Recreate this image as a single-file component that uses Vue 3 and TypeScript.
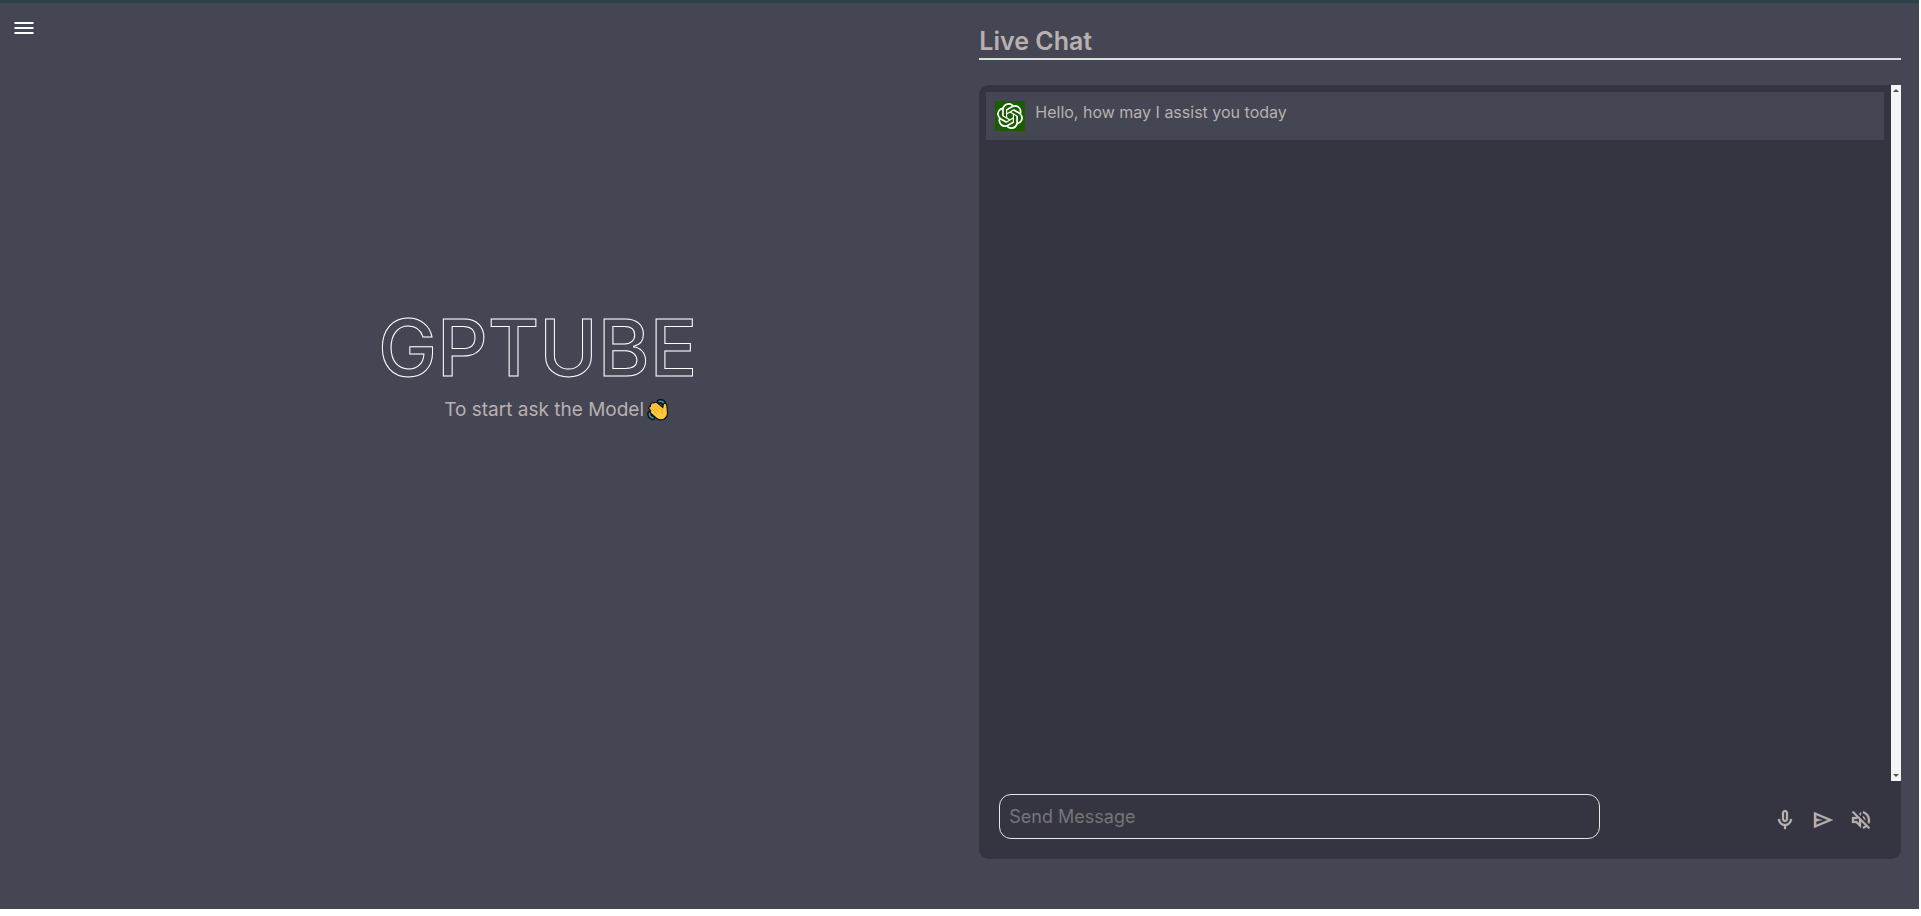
<script setup lang="ts">
import { ref } from 'vue'

interface Message {
  id: number
  text: string
}

const messages = ref<Message[]>([{ id: 1, text: 'Hello, how may I assist you today' }])
const draft = ref<string>('')
</script>

<template>
  <div class="page">
    <main class="layout">
      <section class="welcome">
        <button class="icon-button menu" type="button" aria-label="Menu">
          <svg width="20" height="12" viewBox="0 0 20 12" fill="#fff">
            <path d="M.5 0h19v2H.5zM.5 5h19v2H.5zM.5 10h19v2H.5z" />
          </svg>
        </button>
        <div class="hero">
          <h1 class="wordmark">GPTUBE</h1>
          <p class="tagline">
            <span>To start ask the Model</span>
            <svg class="wave" width="22" height="22" viewBox="0 0 22 22" role="img" aria-label="Waving hand">
              <g fill="none" stroke-linecap="round" stroke-linejoin="round">
                <path d="M12 2.500Q16 1.500 17 5M2.500 14Q2 18 6 19" stroke="#111" stroke-width="4.500" />
                <path d="M12 2.500Q16 1.500 17 5M2.500 14Q2 18 6 19" stroke="#2d9cb8" stroke-width="1.500" />
              </g>
              <path
                d="M2 9.500Q1.500 7.500 3.500 7.500Q2.500 5.500 4.500 4.800Q5 3 7 4Q8.500 2.500 10.500 4L15.800 8.500L16.300 5.500Q17 3.500 18.800 4.500Q20 5.500 20 8L20.500 13.500Q20.500 18.500 16.500 20.300Q12 22 8.500 18.500L4 14.500Q2.500 13 3.700 11.800Z"
                fill="#ffc83d"
                stroke="#111"
                stroke-width="1.200"
                stroke-linejoin="round"
              />
              <path
                d="M5 6.500L11 12M8 5.500L13 10M4.500 9.500L9.500 14.500M16 9Q14 11 15 14"
                fill="none"
                stroke="#d99a1c"
                stroke-width=".8"
                stroke-linecap="round"
              />
            </svg>
          </p>
        </div>
      </section>

      <section class="chat">
        <h2 class="title">Live Chat</h2>
        <div class="panel">
          <div class="scroller">
            <ul class="messages">
              <li v-for="message in messages" :key="message.id" class="message">
                <span class="avatar">
                  <svg width="26" height="26" viewBox="0 0 24 24" fill="#fff">
                    <path
                      d="M22.2819 9.8211a5.9847 5.9847 0 0 0-.5157-4.9108 6.0462 6.0462 0 0 0-6.5098-2.9A6.0651 6.0651 0 0 0 4.9807 4.1818a5.9847 5.9847 0 0 0-3.9977 2.9 6.0462 6.0462 0 0 0 .7427 7.0966 5.98 5.98 0 0 0 .511 4.9107 6.051 6.051 0 0 0 6.5146 2.9001A5.9847 5.9847 0 0 0 13.2599 24a6.0557 6.0557 0 0 0 5.7718-4.2058 5.9894 5.9894 0 0 0 3.9977-2.9001 6.0557 6.0557 0 0 0-.7475-7.0729zm-9.022 12.6081a4.4755 4.4755 0 0 1-2.8764-1.0408l.1419-.0804 4.7783-2.7582a.7948.7948 0 0 0 .3927-.6813v-6.7369l2.02 1.1686a.071.071 0 0 1 .038.052v5.5826a4.504 4.504 0 0 1-4.4945 4.4944zm-9.6607-4.1254a4.4708 4.4708 0 0 1-.5346-3.0137l.142.0852 4.783 2.7582a.7712.7712 0 0 0 .7806 0l5.8428-3.3685v2.3324a.0804.0804 0 0 1-.0332.0615L9.74 19.9502a4.4992 4.4992 0 0 1-6.1408-1.6464zM2.3408 7.8956a4.485 4.485 0 0 1 2.3655-1.9728V11.6a.7664.7664 0 0 0 .3879.6765l5.8144 3.3543-2.0201 1.1685a.0757.0757 0 0 1-.071 0l-4.8303-2.7865A4.504 4.504 0 0 1 2.3408 7.872zm16.5963 3.8558L13.1038 8.364 15.1192 7.2a.0757.0757 0 0 1 .071 0l4.8303 2.7913a4.4944 4.4944 0 0 1-.6765 8.1042v-5.6772a.79.79 0 0 0-.407-.667zm2.0107-3.0231l-.142-.0852-4.7735-2.7818a.7759.7759 0 0 0-.7854 0L9.409 9.2297V6.8974a.0662.0662 0 0 1 .0284-.0615l4.8303-2.7866a4.4992 4.4992 0 0 1 6.6802 4.66zM8.3065 12.863l-2.02-1.1638a.0804.0804 0 0 1-.038-.0567V6.0742a4.4992 4.4992 0 0 1 7.3757-3.4537l-.142.0805L8.704 5.459a.7948.7948 0 0 0-.3927.6813zm1.0976-2.3654l2.602-1.4998 2.6069 1.4998v2.9994l-2.5974 1.4997-2.6067-1.4997Z"
                    />
                  </svg>
                </span>
                <p class="message-text">{{ message.text }}</p>
              </li>
            </ul>
            <div class="scrollbar" aria-hidden="true">
              <svg width="6" height="3" viewBox="0 0 6 3" fill="#505050"><path d="M0 3L3 0L6 3Z" /></svg>
              <svg width="6" height="3" viewBox="0 0 6 3" fill="#505050"><path d="M0 0L3 3L6 0Z" /></svg>
            </div>
          </div>
          <form class="composer" @submit.prevent>
            <input v-model="draft" class="field" type="text" placeholder="Send Message" aria-label="Send Message" />
            <div class="actions">
              <button class="icon-button" type="button" aria-label="Record voice">
                <svg width="24" height="24" viewBox="0 0 24 24" fill="currentColor">
                  <path
                    d="M12 14c1.660 0 3-1.340 3-3V5c0-1.660-1.340-3-3-3S9 3.340 9 5v6c0 1.660 1.340 3 3 3zm-1-9c0-.550.450-1 1-1s1 .450 1 1v6c0 .550-.450 1-1 1s-1-.450-1-1V5zm6 6c0 2.760-2.240 5-5 5s-5-2.240-5-5H5c0 3.530 2.610 6.430 6 6.920V21h2v-3.080c3.390-.490 6-3.390 6-6.920h-2z"
                    stroke="currentColor"
                    stroke-width=".3"
                  />
                </svg>
              </button>
              <button class="icon-button" type="submit" aria-label="Send">
                <svg width="24" height="24" viewBox="0 -960 960 960" fill="currentColor">
                  <path
                    d="M120-160v-640l760 320-760 320Zm80-120 474-200-474-200v140l240 60-240 60v140Zm0 0v-400 400Z"
                    stroke="currentColor"
                    stroke-width="12"
                  />
                </svg>
              </button>
              <button class="icon-button" type="button" aria-label="Sound off">
                <svg width="24" height="24" viewBox="0 0 24 24" fill="currentColor">
                  <path
                    d="M4.340 2.930L2.930 4.340 7.290 8.700 7 9H3v6h4l5 5v-6.590l4.180 4.180c-.650.490-1.380.880-2.180 1.110v2.060c1.340-.300 2.570-.920 3.610-1.750l2.050 2.050 1.410-1.410L4.340 2.930zM10 15.170L7.830 13H5v-2h2.830l.880-.880L10 11.410v3.760zM19 12c0 .820-.150 1.610-.410 2.340l1.530 1.530c.560-1.170.880-2.480.880-3.870 0-4.280-2.990-7.860-7-8.770v2.060c2.890.860 5 3.540 5 6.710zm-7-8l-1.880 1.880L12 7.760V4zm4.500 8c0-1.770-1.020-3.290-2.500-4.030v1.790l2.480 2.480c.010-.080.020-.160.020-.240z"
                    stroke="currentColor"
                    stroke-width=".3"
                  />
                </svg>
              </button>
            </div>
          </form>
        </div>
      </section>
    </main>
  </div>
</template>

<style>
body {
  background: #fff;
}
</style>

<style scoped>
.page {
  box-sizing: border-box;
  height: calc(100vh - 7px);
  margin-right: 2px;
  border-top: 3px solid #2b4347;
  background: #444654;
  color: #b9b0af;
  font-family: Inter, 'Open Sans', sans-serif;
  font-size: 16px;
  line-height: 24px;
}

.layout {
  display: grid;
  grid-template-columns: 51fr 48fr;
  height: 100%;
  box-sizing: border-box;
  padding-right: 18px;
}

.welcome {
  display: flex;
  flex-direction: column;
  align-items: flex-start;
}

.icon-button {
  display: flex;
  padding: 0;
  border: 0;
  background: none;
  color: inherit;
  cursor: pointer;
}

.menu {
  margin: 19px 14px;
}

.hero {
  box-sizing: border-box;
  width: 100%;
  padding: 254px 0 0 96px;
  display: flex;
  flex-direction: column;
  align-items: center;
}

.wordmark {
  margin: 0;
  font-size: 79px;
  font-weight: 500;
  line-height: 80px;
  color: transparent;
  -webkit-text-stroke: 1px #fff;
}

.tagline {
  display: flex;
  align-items: center;
  gap: 3px;
  margin: 11px 0 0;
  padding-left: 38px;
  font-size: 19px;
}

.chat {
  display: flex;
  flex-direction: column;
}

.title {
  margin: 0 0 25px;
  padding: 22px 0 1px;
  border-bottom: 2px solid #dededc;
  font-size: 25px;
  font-weight: 600;
  line-height: 32px;
}

.panel {
  flex: 1;
  display: flex;
  flex-direction: column;
  margin-bottom: 50px;
  border-radius: 10px;
  background: #343541;
}

.scroller {
  flex: 1;
  display: flex;
}

.messages {
  flex: 1;
  margin: 0;
  padding: 7px;
  list-style: none;
}

.message {
  display: flex;
  gap: 10px;
  padding: 9px;
  background: #444654;
}

.avatar {
  display: flex;
  align-items: center;
  justify-content: center;
  width: 30px;
  height: 30px;
  border-radius: 3px;
  background: #1a5c00;
}

.message-text {
  margin: 0;
  line-height: 22px;
}

.scrollbar {
  box-sizing: border-box;
  display: flex;
  flex-direction: column;
  align-items: center;
  justify-content: space-between;
  width: 10px;
  padding: 4px 0;
  background: #f5f5f5;
}

.composer {
  display: grid;
  grid-template-columns: 11fr 5fr;
  align-items: center;
  padding: 13px 28px 20px 20px;
}

.field {
  box-sizing: border-box;
  width: 100%;
  height: 45px;
  padding: 0 9px;
  border: 1px solid #e6e6e6;
  border-radius: 12px;
  background: transparent;
  color: inherit;
  font: inherit;
  font-size: 18px;
}

.field::placeholder {
  color: #757575;
}

.actions {
  display: flex;
  justify-content: flex-end;
  gap: 14px;
  padding-top: 6px;
}
</style>
